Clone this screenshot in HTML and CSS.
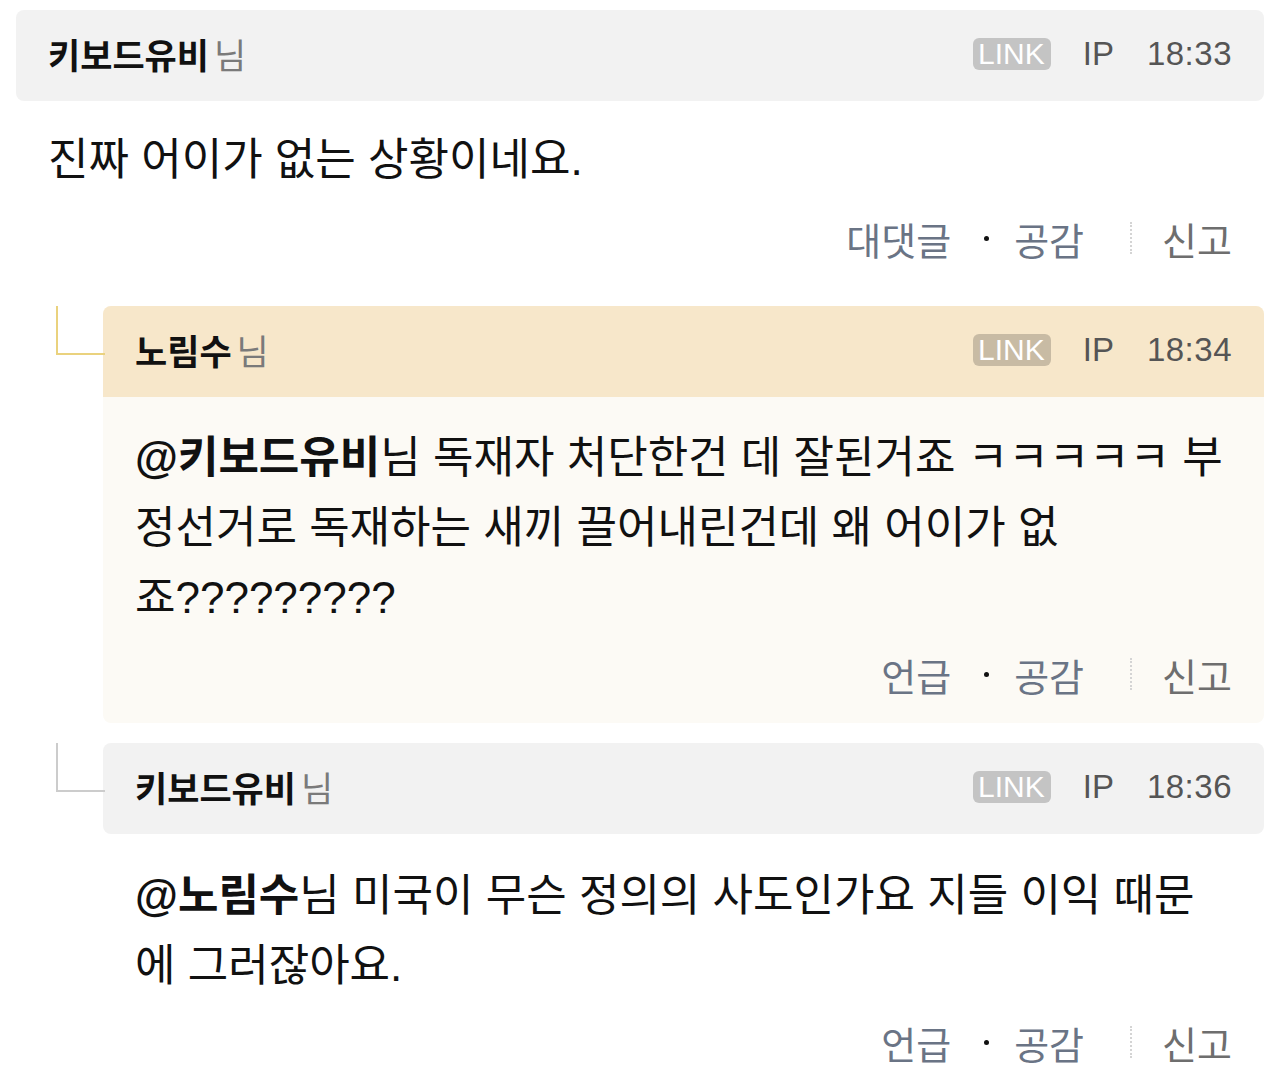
FILE: index.html
```html
<!DOCTYPE html>
<html lang="ko">
<head>
<meta charset="utf-8">
<link rel="stylesheet" href="styles.css">
</head>
<body>
<div class="page">
  <div class="comment">
    <div class="head head-gray">
      <div class="who"><span class="name">키보드유비</span><span class="nim">님</span></div>
      <div class="meta"><span class="badge">LINK</span><span class="ip">IP</span><span class="time">18:33</span></div>
    </div>
    <div class="body">
      <p class="text">진짜 어이가 없는 상황이네요.</p>
      <div class="actions">
        <span class="act">대댓글</span><span class="dot"></span><span class="act">공감</span><span class="sep"></span><span class="act report">신고</span>
      </div>
    </div>
  </div>

  <div class="reply">
    <div class="connector connector-yellow"></div>
    <div class="reply-box reply-highlight">
      <div class="head head-beige">
        <div class="who"><span class="name">노림수</span><span class="nim">님</span></div>
        <div class="meta"><span class="badge">LINK</span><span class="ip">IP</span><span class="time">18:34</span></div>
      </div>
      <div class="body body-reply">
        <p class="text"><b class="mention">@키보드유비</b>님 독재자 처단한건 데 잘된거죠 ㅋㅋㅋㅋㅋ 부정선거로 독재하는 새끼 끌어내린건데 왜 어이가 없죠?????????</p>
        <div class="actions">
          <span class="act">언급</span><span class="dot"></span><span class="act">공감</span><span class="sep"></span><span class="act report">신고</span>
        </div>
      </div>
    </div>
  </div>

  <div class="reply reply-second">
    <div class="connector connector-gray"></div>
    <div class="reply-box">
      <div class="head head-gray">
        <div class="who"><span class="name">키보드유비</span><span class="nim">님</span></div>
        <div class="meta"><span class="badge">LINK</span><span class="ip">IP</span><span class="time">18:36</span></div>
      </div>
      <div class="body body-reply">
        <p class="text"><b class="mention">@노림수</b>님 미국이 무슨 정의의 사도인가요 지들 이익 때문에 그러잖아요.</p>
        <div class="actions">
          <span class="act">언급</span><span class="dot"></span><span class="act">공감</span><span class="sep"></span><span class="act report">신고</span>
        </div>
      </div>
    </div>
  </div>
</div>
</body>
</html>
```

FILE: styles.css
```css
* { box-sizing: border-box; }
html, body { margin: 0; padding: 0; background: #ffffff; }
body {
  font-family: "Liberation Sans", "Noto Sans CJK KR", sans-serif;
  color: #111111;
}
.page {
  width: 1280px;
  padding: 10px 16px 0 16px;
}
.head {
  height: 91px;
  padding: 0 32px 4px 32px;
  display: flex;
  align-items: center;
  justify-content: space-between;
  border-radius: 8px;
}
.head-gray { background: #f2f2f2; }
.head-beige { background: #f7e7ca; border-radius: 8px 8px 0 0; }
.who { display: flex; align-items: baseline; }
.name { font-size: 35px; font-weight: 700; color: #111; }
.nim { font-size: 35px; color: #7a7a7a; margin-left: 5px; }
.meta { display: flex; align-items: center; }
.badge {
  font-size: 30px;
  line-height: 32px;
  color: #ffffff;
  background: rgba(0, 0, 0, 0.19);
  border-radius: 6px;
  padding: 0 6px 0 5px;
}
.ip { font-size: 33px; color: #555; margin-left: 32px; }
.time { font-size: 33px; color: #555; margin-left: 33px; letter-spacing: 0.5px; }
.body { padding: 24px 32px 0 32px; }
.text {
  margin: 0;
  font-size: 44px;
  line-height: 70px;
  color: #111;
}
.mention { font-weight: 700; }
.actions {
  display: flex;
  justify-content: flex-end;
  align-items: center;
  height: 50px;
  margin-top: 18px;
}
.act { font-size: 38px; color: #6a7485; }
.report { color: #6e6e6e; }
.dot {
  width: 5px; height: 5px; border-radius: 50%;
  background: #111;
  margin: 0 25px 0 33px;
}
.sep {
  width: 0; height: 32px;
  border-left: 2px dotted #d4d4d4;
  margin: 0 30px 0 46px;
}
.reply {
  display: flex;
  margin-top: 43px;
}
.reply-second { margin-top: 20px; }
.connector {
  width: 87px;
  flex: none;
  position: relative;
}
.connector::before {
  content: "";
  position: absolute;
  left: 40px;
  top: 0;
  width: 47px;
  height: 47px;
  border-left: 2px solid;
  border-bottom: 2px solid;
  border-color: inherit;
}
.connector-yellow { border-color: #ead27e; }
.connector-gray { border-color: #cccccc; }
.reply-box { flex: 1; }
.reply-highlight { background: #fcfaf5; border-radius: 8px; }
.body-reply { padding: 26px 32px 24px 32px; }
.body-reply .actions { margin-top: 16px; }
.reply-second .body-reply { padding-top: 27px; background: #fff; }
```
